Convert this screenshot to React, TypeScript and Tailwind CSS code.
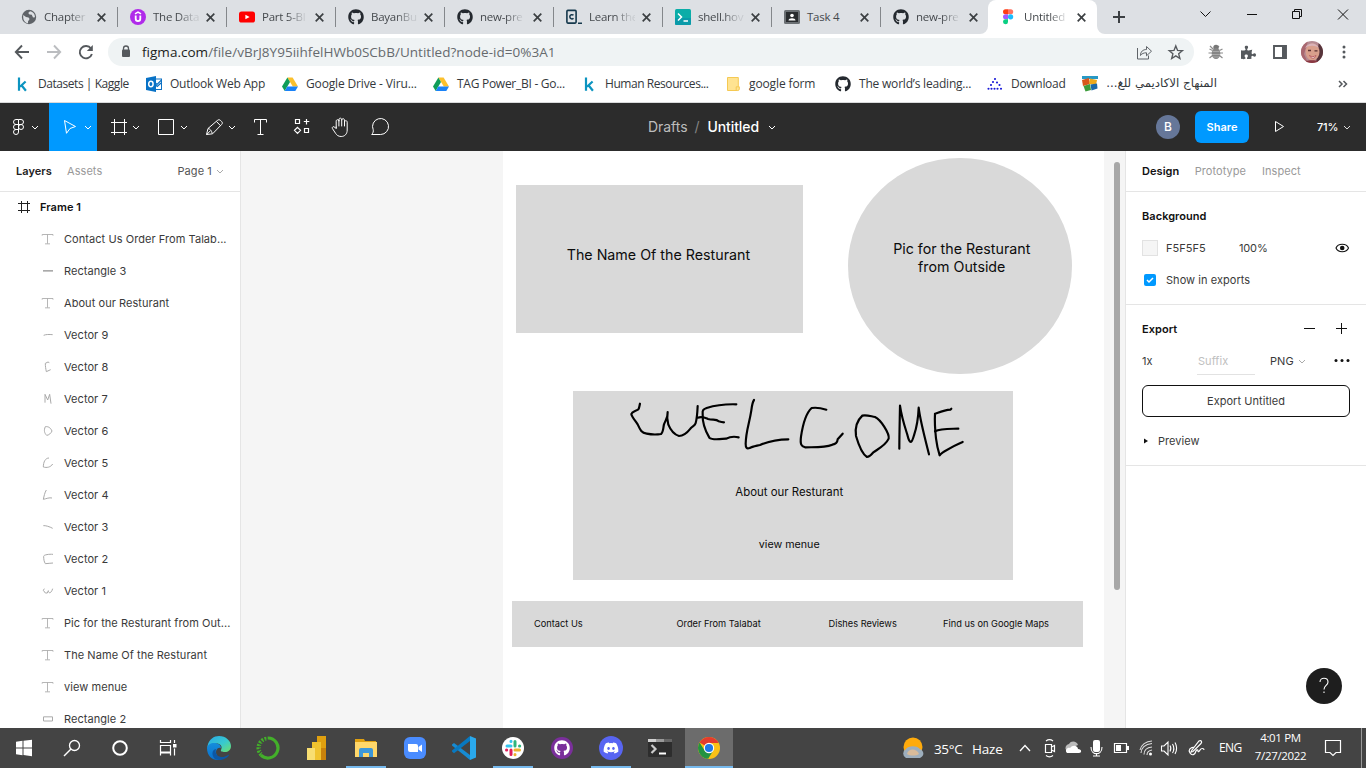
import React from "react";
import { FaGithub, FaDiscord, FaPuzzlePiece } from "react-icons/fa";

const INTER = "font-['Inter','Liberation_Sans',sans-serif]";
const UI = "font-['Open_Sans','Noto_Sans',sans-serif]";

type SvgProps = { w?: number; h?: number; vb?: string; className?: string; children: React.ReactNode };
const Svg = ({ w = 16, h = w, vb, className = "", children }: SvgProps) => (
  <svg width={w} height={h} viewBox={vb ?? `0 0 ${w} ${h}`} fill="none" className={`block shrink-0 ${className}`}>
    {children}
  </svg>
);

/* ---------- brand icons ---------- */
const Globe = () => (
  <Svg>
    <circle cx="8" cy="8" r="7.200" fill="#5f6368" />
    <path d="M2.300 6 5 8l2.500.4L8.600 10 7 12.500v1.700C4 13.800 1.600 11 2.300 6ZM9 2.200 7.200 4l1.300 1.500 2.300.3L12 8.600l2-.3C14 5 12 2.600 9 2.200Z" fill="#dde0e4" />
  </Svg>
);
const Udemy = () => (
  <Svg>
    <circle cx="8" cy="8" r="8" fill="#b02aea" />
    <path d="M5 4.900 8 3.100l3 1.800" stroke="#fff" strokeWidth="1.500" />
    <path d="M5.700 6.500v3.300a2.300 2.300 0 0 0 4.600 0V6.500" stroke="#fff" strokeWidth="1.800" />
  </Svg>
);
const YouTube = () => (
  <Svg>
    <rect y="2.500" width="16" height="11" rx="2.600" fill="#f00" />
    <path d="m6.400 5.700 4.200 2.300-4.200 2.300Z" fill="#fff" />
  </Svg>
);
const Github = () => <FaGithub className="block size-4 shrink-0 text-[#24292f]" />;
const Codecademy = () => (
  <Svg>
    <rect x=".9" y="1.400" width="9.200" height="12.700" rx="1" stroke="#15384c" strokeWidth="1.600" />
    <path d="M7.500 6.300C6.500 5.300 3.800 5.400 3.800 7.800s2.700 2.500 3.700 1.500M12 14.200h4" stroke="#15384c" strokeWidth="1.500" />
  </Svg>
);
const ShellHow = () => (
  <Svg>
    <rect width="16" height="16" rx="1.500" fill="#0bada8" />
    <path d="M0 9h16v5.500a1.500 1.500 0 0 1-1.500 1.500h-13A1.500 1.500 0 0 1 0 14.500Z" fill="#0a9aa9" />
    <path d="m3 4.500 3.500 3.500L3 11.500M8.500 12h4.500" stroke="#fff" strokeWidth="1.500" />
  </Svg>
);
const Classroom = () => (
  <Svg>
    <rect y="1" width="16" height="14" rx="1.500" fill="#6b7074" />
    <rect x="2" y="3" width="12" height="10" fill="#292c2f" />
    <circle cx="8" cy="6.500" r="1.800" fill="#fff" />
    <path d="M4.500 11.500c0-3 7-3 7 0Z" fill="#fff" />
  </Svg>
);
const FigmaLogo = () => (
  <Svg>
    <path d="M5.500.3H8v5H5.500a2.500 2.500 0 0 1 0-5Z" fill="#ff3d14" />
    <path d="M8 .3h2.700a2.500 2.500 0 0 1 0 5H8Z" fill="#ff7262" />
    <path d="M5.500 5.300H8v5H5.500a2.500 2.500 0 0 1 0-5Z" fill="#a259ff" />
    <circle cx="10.600" cy="7.800" r="2.600" fill="#1abcfe" />
    <path d="M5.500 10.300H8v2.600a2.500 2.500 0 1 1-2.500-2.600Z" fill="#0acf83" />
  </Svg>
);
const Kaggle = () => (
  <Svg>
    <path d="M5 1.500v13.300M11.600 5.500 6 10.800M7.500 9.200l4.400 5.600" stroke="#0c94c0" strokeWidth="2.200" />
  </Svg>
);
const Outlook = () => (
  <Svg>
    <rect x="7" y="3" width="8.500" height="10.500" fill="#fff" stroke="#0c71c4" />
    <path d="m8 5.500 3 3 4.500-4.500M9.500 9l1.800 1.500L15 7" stroke="#0c71c4" strokeWidth="1.200" />
    <path d="M0 2 10 0v16L0 14Z" fill="#0872c6" />
    <ellipse cx="4.900" cy="8" rx="2.200" ry="2.700" stroke="#fff" strokeWidth="1.500" />
  </Svg>
);
const Drive = () => (
  <Svg>
    <path d="M5.400 1.500h5.200L16 10.500h-5.200Z" fill="#fbc02d" />
    <path d="M5.400 1.500 8 6 2.700 14.900 0 10.500Z" fill="#0f9d58" />
    <path d="M5.300 10.500H16l-2.700 4.400H2.700Z" fill="#1a82f7" />
  </Svg>
);
const FolderPage = () => (
  <Svg>
    <path d="M2.500 1.500h10.800v9.300h1V13a1.500 1.500 0 0 1-1.500 1.500H2.500Z" fill="#ffe391" stroke="#f5c953" />
    <path d="M11.200 14.300v-3.500h2.300" stroke="#f5c953" />
  </Svg>
);
const Dots = () => (
  <Svg>
    {[[8, 3], [6, 6], [10, 6.500], [4, 9], [12.500, 9], [1.500, 12.800], [4.500, 12.800], [7.500, 12.800], [10.500, 12.800], [14, 12.800]].map(([x, y]) => (
      <circle key={`${x}-${y}`} cx={x} cy={y} r="1.050" fill="#1818d8" />
    ))}
  </Svg>
);
const Books = () => (
  <Svg>
    <path d="M0 0h16v3H0Z" fill="#2899c5" />
    <path d="m0 4 7-2 1 6-7 2Z" fill="#d9571c" />
    <path d="m8 2.500 7 1.500-1 5-7-1Z" fill="#eda91c" />
    <path d="m1.500 10 6.500-2 1 6-5.500 1.500Z" fill="#3c9c3b" />
    <path d="m8.500 8.500 6.500-1 .5 5-6 2Z" fill="#1a68a9" />
  </Svg>
);

/* ---------- browser ---------- */
const tabs: { label: string; icon: React.ReactNode }[] = [
  { label: "Chapter", icon: <Globe /> },
  { label: "The Data", icon: <Udemy /> },
  { label: "Part 5-Bl", icon: <YouTube /> },
  { label: "BayanBu", icon: <Github /> },
  { label: "new-pre", icon: <Github /> },
  { label: "Learn the", icon: <Codecademy /> },
  { label: "shell.hov", icon: <ShellHow /> },
  { label: "Task 4", icon: <Classroom /> },
  { label: "new-pre", icon: <Github /> },
  { label: "Untitled", icon: <FigmaLogo /> },
];

const TabStrip = () => (
  <div className="flex h-[34px] shrink-0 bg-[#dde0e4] pl-2">
    {tabs.map((t, i) => {
      const active = i === tabs.length - 1;
      const fade = t.label === "Task 4" ? "" : "[mask-image:linear-gradient(to_right,black_55%,rgba(0,0,0,0.15)_90%)]";
      return (
        <div key={i} className={`relative flex h-[34px] w-[109px] shrink-0 items-center pl-[13px] ${active ? "-ml-px rounded-t-lg bg-white pl-[12px]!" : ""}`}>
          {t.icon}
          <span className={`ml-[7px] w-[46px] text-[11.500px] tracking-[-0.250px] whitespace-nowrap text-[#45494d] ${active ? "ml-[8px]!" : ""} ${fade}`}>
            {t.label}
          </span>
          <Svg w={9} className="ml-[7px]">
            <path d="m.7.7 7.600 7.600M8.300.7.7 8.300" stroke="#3c4043" strokeWidth="1.700" />
          </Svg>
          {i < 8 && <span className="absolute top-[7px] right-[-1px] h-5 w-px bg-[#84878b]" />}
          {active && (
            <>
              <Svg w={8} className="absolute bottom-0 -left-2"><path d="M8 0v8H0a8 8 0 0 0 8-8Z" fill="#fff" /></Svg>
              <Svg w={8} className="absolute -right-2 bottom-0"><path d="M0 0v8h8a8 8 0 0 1-8-8Z" fill="#fff" /></Svg>
            </>
          )}
        </div>
      );
    })}
    <Svg w={43} h={34}><path d="M22 11v12M16 17h12" stroke="#3c4043" strokeWidth="2" /></Svg>
    <Svg w={118} h={34} className="ml-auto">
      <path d="m2.500 11.500 5 5 5-5M49 14.500h10" stroke="#111" />
      <path d="M94.500 11.500h7v7h-7ZM96.500 11.500v-2h7v7h-2" stroke="#111" />
    </Svg>
    <Svg w={12} h={34} className="mr-[17px] ml-[21px]"><path d="m1 9.500 10 10m0-10-10 10" stroke="#111" /></Svg>
  </div>
);

const AddressBar = () => (
  <div className="flex h-[36px] shrink-0 items-center bg-white">
    <Svg w={108} h={36}>
      <path d="M29 18H16.500M22 11.500 15.800 18l6.200 6.500" stroke="#55595d" strokeWidth="1.900" />
      <path d="M47 18h12.500M54 11.500l6.200 6.500-6.200 6.500" stroke="#bbbdc0" strokeWidth="1.900" />
      <path d="M91 14.500a6.200 6.200 0 1 0 .9 5.500" stroke="#55595d" strokeWidth="1.900" />
      <path d="M92.800 11v6h-6Z" fill="#55595d" />
    </Svg>
    <div className="flex h-7 w-[1086px] items-center rounded-full bg-[#eff3f4]">
      <Svg w={34} h={28}>
        <rect x="14" y="11.500" width="8" height="7.500" rx="1" fill="#55595d" />
        <path d="M15.500 12v-1.500a2.500 2.500 0 0 1 5 0V12" stroke="#55595d" strokeWidth="1.300" />
      </Svg>
      <span className="text-[13.500px] tracking-[0.025px] whitespace-nowrap text-[#666a6e]">
        <span className="text-[#1b1d20]">figma.com</span>/file/vBrJ8Y95iihfelHWb0SCbB/Untitled?node-id=0%3A1
      </span>
      <Svg w={68} h={28} className="ml-auto">
        <path d="M11.500 10v11h11v-3.500" stroke="#5f6368" />
        <path d="M14.500 17.500c0-4 2.500-6 6-6V8.500l5 4.700-5 4.600v-3c-3 0-4.500.7-6 2.700Z" stroke="#5f6368" />
        <path d="m49.800 7.900 1.800 4.500 4.800.3-3.700 3.100 1.200 4.700-4.100-2.600-4.100 2.600 1.200-4.700-3.700-3.100 4.800-.3Z" stroke="#55595d" strokeWidth="1.400" />
      </Svg>
    </div>
    <Svg w={44} h={36}>
      <path d="m16 12 3 3m6-3-3 3m-7.500 4H29M15.500 24l3-2.500m10 2.500-3-2.500M15.500 15l3 1.500m10-1.500-3 1.500" stroke="#8c8c8c" strokeWidth="1.200" />
      <circle cx="22" cy="13.500" r="2.700" fill="#777" />
      <ellipse cx="22" cy="19.500" rx="4.300" ry="5.500" fill="#858585" />
      <path d="M18.500 17.500h7m-7.500 3h8m-7 2.500h6" stroke="#a9a9a9" />
    </Svg>
    <FaPuzzlePiece className="ml-[3px] block size-[15px] text-[#55595d]" />
    <Svg w={14} className="ml-[17px]"><path d="M1 1h12v12H1Z" stroke="#55595d" strokeWidth="1.900" /><path d="M9 1h4v12H9Z" fill="#55595d" /></Svg>
    <Svg w={22} className="ml-[14px]">
      <defs><clipPath id="face"><circle cx="11" cy="11" r="11" /></clipPath></defs>
      <g clipPath="url(#face)">
        <path d="M0 0h22v22H0Z" fill="#b68b92" />
        <path d="M0 0h7L3 13l4 9H0Z" fill="#a9676f" />
        <path d="M18 0h4v22h-7Z" fill="#57343b" />
        <ellipse cx="11.500" cy="11" rx="7" ry="8.500" fill="#d99f8c" />
        <path d="M4 7c3-6 11-6 14 0C14 4 8 4 4 7Z" fill="#d9b3b9" />
        <path d="M7 9.500h3m3.500.3h3" stroke="#5c3230" strokeWidth="1.300" />
        <path d="M8.500 14.500c2 1.500 4.500 1.500 6.500 0-1 3.500-5 3.500-6.500 0Z" fill="#fff" stroke="#b0464c" strokeWidth=".8" />
        <path d="M5 20c3-1 9-1 12 0v2H5Z" fill="#8a3741" />
      </g>
    </Svg>
    <Svg w={22} h={36} className="ml-[10px]">
      <circle cx="11" cy="13" r="1.500" fill="#55595d" /><circle cx="11" cy="18" r="1.500" fill="#55595d" /><circle cx="11" cy="23" r="1.500" fill="#55595d" />
    </Svg>
  </div>
);

const bookmarks = [
  { icon: <Kaggle />, label: "Datasets | Kaggle", cls: "w-[132px] tracking-[-0.450px]" },
  { icon: <Outlook />, label: "Outlook Web App", cls: "w-[136px] tracking-[-0.220px]" },
  { icon: <Drive />, label: "Google Drive - Viru...", cls: "w-[151px] tracking-[-0.150px]" },
  { icon: <Drive />, label: "TAG Power_BI - Go...", cls: "w-[148px] tracking-[-0.270px]" },
  { icon: <Kaggle />, label: "Human Resources...", cls: "w-[144px] tracking-[-0.440px]" },
  { icon: <FolderPage />, label: "google form", cls: "w-[110px] tracking-[-0.120px]" },
  { icon: <Github />, label: "The world’s leading...", cls: "w-[152px] tracking-[-0.200px]" },
  { icon: <Dots />, label: "Download", cls: "w-[95px] tracking-[-0.300px]" },
];

const Bookmarks = () => (
  <div className="flex h-[33px] shrink-0 items-center border-b border-[#d9dadb] bg-white pb-[4px] pl-[14px] text-[12px] text-[#34383c]">
    {bookmarks.map((b) => (
      <div key={b.label} className={`flex shrink-0 items-center gap-2 whitespace-nowrap ${b.cls}`}>
        {b.icon}
        <span>{b.label}</span>
      </div>
    ))}
    <Books />
    <span dir="rtl" className="ml-2 w-[111px] font-['DejaVu_Sans',sans-serif] text-[11.800px] whitespace-nowrap">المنهاج الاكاديمي للغ...</span>
    <Svg w={10} className="mr-[18px] ml-auto"><path d="m1 2 3 3-3 3m4.500-6 3 3-3 3" stroke="#55595d" strokeWidth="1.500" /></Svg>
  </div>
);

/* ---------- figma toolbar ---------- */
const Chev = ({ x }: { x: number }) => <path d={`m${x} 23 3 3 3-3`} stroke="#fff" />;

const Tool = ({ w, active, children }: { w: number; active?: boolean; children: React.ReactNode }) => (
  <button className={`block shrink-0 ${active ? "bg-[#0099ff]" : ""}`}>
    <Svg w={w} h={48}>{children}</Svg>
  </button>
);

const Toolbar = () => (
  <div className={`flex h-12 shrink-0 items-center bg-[#2c2c2c] text-white ${INTER}`}>
    <Tool w={49}>
      <path d="M18.500 16.500h-2.500a2.500 2.500 0 0 0 0 5h2.500m0-5v12.500a2.500 2.500 0 1 1-2.500-2.500h2.500m0-10H21a2.500 2.500 0 0 1 0 5h-2.500m0 0H16a2.500 2.500 0 0 0 0 5h2.500M21 21.500a2.500 2.500 0 1 1 0 5 2.500 2.500 0 0 1 0-5Z" stroke="#fff" />
      <Chev x={32} />
    </Tool>
    <Tool w={48} active>
      <path d="m15.500 17.500 11 6-5.500 2-3.500 4.800Z" stroke="#fff" strokeLinejoin="round" />
      <Chev x={36} />
    </Tool>
    <Tool w={48}><path d="M14 19.500h16M14 29.500h16M17.500 16v16M27.500 16v16" stroke="#fff" /><Chev x={36} /></Tool>
    <Tool w={48}><path d="M13.500 16.500h15v15h-15Z" stroke="#fff" /><Chev x={36} /></Tool>
    <Tool w={48}>
      <path d="m13.500 31.500 1.500-6 9.300-8c1-1 2.300-1 3.300 0l1 1c1 1 1 2 0 3l-9 9.300Zm1.500-6c2 .3 3.500 2 4.300 5M23.500 18.500l4 4.200M13.700 31.500l3.500-3.500" stroke="#fff" />
      <Chev x={36} />
    </Tool>
    <Tool w={40}><path d="M13.500 19.500v-3h12v3M19.500 16.500v15M16.500 31.500h6" stroke="#fff" /></Tool>
    <Tool w={40}>
      <path d="M14.500 16.500h4v4h-4ZM23.500 25.500h4v4h-4ZM25.500 16v5.500M22.800 18.500h5.500M16.500 24.300l3 3-3 3-3-3Z" stroke="#fff" strokeWidth="1.200" />
    </Tool>
    <Tool w={40}>
      <path transform="translate(.7 0)" d="M14.500 24.500v-6.300c0-2 2.700-2 2.700 0v-1.500c0-2 2.800-2 2.800 0v.5c0-2 2.800-2 2.800 0v2c0-2 2.700-2 2.700 0V27c0 4-2.500 6.500-6 6.500-3 0-4.500-1.500-5.500-3l-3.300-5c-.7-1.500 1.200-2.500 2.300-1.300l1.500 1.500V24M17.200 17v6M20 17v6M22.800 18v5" stroke="#fff" strokeLinecap="round" />
    </Tool>
    <Tool w={40}><path transform="translate(.7 0)" d="M10 31.500h9a8 8 0 1 0-7.500-4.800c.3 1.500 0 3.300-1.500 4.800Z" stroke="#fff" /></Tool>
    <div className="flex w-[377px] items-center pl-[247px] text-[14px] tracking-[-0.050px] whitespace-nowrap -translate-y-px">
      <span className="text-[#bdbdbd]">Drafts</span>
      <span className="mx-[7px] text-[#858585]">/</span>
      <span className="ml-px font-medium tracking-[-0.100px]">Untitled</span>
      <Svg w={8} className="mt-[2px] ml-[9px]"><path d="m1 3 3 3 3-3" stroke="#fff" /></Svg>
    </div>
    <span className="ml-auto flex size-6 items-center justify-center rounded-full bg-[#667799] text-[12px] font-medium">B</span>
    <button className="ml-[15px] h-8 w-[54px] rounded-md bg-[#0099ff] text-[11px] font-semibold tracking-[0.050px]">Share</button>
    <Svg w={60} h={48}><path d="M26.500 18.500v10l8-5Z" stroke="#fff" /></Svg>
    <span className="ml-[8px] w-[26px] text-[11px] font-medium tracking-[-0.200px]">71%</span>
    <Svg w={8} className="mr-[15px]"><path d="m1 3 3 3 3-3" stroke="#ddd" /></Svg>
  </div>
);

/* ---------- layers panel ---------- */
const textGlyph = "M6.500 14V10.500H39V14M22.500 10.500V38M15 38.500H30";
const layers: { label: string; d: string; sw?: number }[] = [
  { label: "Contact Us Order From Talab...", d: textGlyph, sw: 2.600 },
  { label: "Rectangle 3", d: "M9 23.500H39", sw: 5 },
  { label: "About our Resturant", d: textGlyph, sw: 2.600 },
  { label: "Vector 9", d: "M11 25C17 22 28 22 38 23" },
  { label: "Vector 8", d: "M28 11 24 9 16 13C16 22 17 28 19 38L32 32" },
  { label: "Vector 7", d: "M15 35V10L23 27 29 10 33 38" },
  { label: "Vector 6", d: "M16 11C11 22 13 30 20 37 26 37 34 30 36 24 31 13 24 10 16 11Z" },
  { label: "Vector 5", d: "M27 9C16 9 10 21 10 36 20 39 32 37 38 27" },
  { label: "Vector 4", d: "M19 9C14 17 12 28 10 37 19 35 28 31 36 33" },
  { label: "Vector 3", d: "M10 20C16 19 29 23 38 28" },
  { label: "Vector 2", d: "M39 10C28 9 11 11 11 16 11 24 12 32 16 38 23 37 32 37 39 36" },
  { label: "Vector 1", d: "M13 17 10 22 16 30H22L25 23C26 33 34 31 38 17" },
  { label: "Pic for the Resturant from Out...", d: textGlyph, sw: 2.600 },
  { label: "The Name Of the Resturant", d: textGlyph, sw: 2.600 },
  { label: "view menue", d: textGlyph, sw: 2.600 },
  { label: "Rectangle 2", d: "M10.500 17.500H37.500V30H10.500Z", sw: 3 },
];

const LayersPanel = () => (
  <aside className="flex w-[241px] shrink-0 flex-col overflow-hidden border-r border-[#e5e5e5] bg-white text-[11px] tracking-[0.060px] text-[#3a3a3a]">
    <div className="flex h-[41px] shrink-0 items-center border-b border-[#e5e5e5] pl-4">
      <span className="w-[51px] font-semibold text-[#222]">Layers</span>
      <span className="w-[110.500px] text-[#999]">Assets</span>
      <span className="text-[#555]">Page 1</span>
      <Svg w={8} className="ml-1"><path d="m1 3 3 3 3-3" stroke="#aaa" /></Svg>
    </div>
    <div className="-mt-px flex h-8 shrink-0 items-center pl-4 font-semibold text-[#111]">
      <Svg><path d="M2 4.500h12M2 11.500h12M5.500 2v12M11.500 2v12" stroke="#222" /></Svg>
      <span className="ml-2">Frame 1</span>
    </div>
    {layers.map((l) => (
      <div key={l.label} className="flex h-8 shrink-0 items-center gap-2 pl-10 whitespace-nowrap">
        <Svg vb="0 0 48 48"><path d={l.d} stroke="#aaa" strokeWidth={l.sw ?? 3} /></Svg>
        <span>{l.label}</span>
      </div>
    ))}
  </aside>
);

/* ---------- canvas ---------- */
const Canvas = () => (
  <main className="relative w-[884px] shrink-0 overflow-hidden bg-[#f5f5f5] text-[#0c0c0c]">
    <div className="absolute top-0 left-[262px] h-full w-[601px] bg-white">
      <div className="absolute top-[34px] left-[13.400px] flex h-[148px] w-[287px] items-center justify-center bg-[#d9d9d9] pb-2 text-[14.250px] whitespace-nowrap">
        <span className="-ml-[3px]">The Name Of the Resturant</span>
      </div>
      <div className="absolute top-[7px] left-[345px] flex h-[216px] w-[223.500px] items-center justify-center rounded-[50%] bg-[#d9d9d9] pb-[17px] pl-1 text-center text-[14.250px] leading-[17.200px] whitespace-nowrap">
        <span>Pic for the Resturant<br />from Outside</span>
      </div>
      <div className="absolute top-[239.500px] left-[69.500px] flex h-[189.500px] w-[440.500px] flex-col items-center bg-[#d9d9d9] pt-[93.500px] pr-[7px] text-[11.400px] leading-4 whitespace-nowrap">
        <span>About our Resturant</span>
        <span className="mt-[37px] text-[10.700px]">view menue</span>
      </div>
      <svg className="absolute top-[229px] left-[57px]" width="460" height="210" viewBox="0 0 1380 630" fill="none" stroke="#000" strokeWidth="6.500" strokeLinecap="round" strokeLinejoin="round">
        <path d="M240 71C238 78 238 85 235 88C226 94 216 94 214 102C216 112 226 122 233 133C240 148 243 158 260 161C275 164 291 164 303 162C310 157 309 147 312 133C318 117 324 112 323 96C321 106 321 119 325 134C332 151 343 164 357 168C372 168 384 155 392 145C399 137 405 137 407 129C411 116 412 99 413 78" />
        <path d="M529 73C494 72 459 78 440 84C429 88 427 91 428 101C427 123 436 153 448 173C456 181 480 177 498 176C512 169 524 169 536 172" />
        <path d="M413 113C428 108 437 114 444 117C459 121 469 116 476 124C482 126 487 127 492 127" />
        <path d="M582 60C577 67 576 74 574 91C568 131 558 151 557 191C557 204 560 207 569 204C576 200 588 198 600 195C626 184 650 178 685 178" />
        <path d="M799 89C783 84 768 82 755 84C735 102 728 136 723 170C720 193 724 200 736 202C757 201 793 204 817 194C828 192 832 188 833 178L848 161" />
        <path d="M945 111C929 108 918 104 907 107C894 119 884 140 888 168C895 192 906 222 921 231C929 231 933 225 940 217C956 206 977 196 986 176C989 160 962 119 945 111Z" />
        <path d="M1018 206C1018 167 1019 131 1020 77C1025 113 1034 139 1042 164C1050 197 1056 188 1062 166C1071 139 1075 109 1076 83C1080 119 1091 160 1107 223" />
        <path d="M1174 86L1171 89C1154 90 1137 97 1125 101C1124 119 1125 148 1128 175C1130 192 1135 213 1139 226C1148 214 1177 200 1208 186" />
        <path d="M1125 154C1141 146 1162 147 1195 146" />
      </svg>
      <div className="absolute top-[450px] left-[9px] flex h-[46px] w-[571px] items-center bg-[#d9d9d9] pl-[22px] text-[9.250px] whitespace-nowrap">
        <span className="w-[142.500px]">Contact Us</span>
        <span className="w-[152px]">Order From Talabat</span>
        <span className="w-[114.500px]">Dishes Reviews</span>
        <span>Find us on Google Maps</span>
      </div>
    </div>
    <div className="absolute top-[11px] left-[873px] h-[428px] w-[6px] rounded-full bg-[#a8a8a8]" />
  </main>
);

/* ---------- design panel ---------- */
const DesignPanel = () => (
  <aside className="relative flex w-[241px] shrink-0 flex-col border-l border-[#e5e5e5] bg-white text-[11px] tracking-[0.050px] text-[#3a3a3a]">
    <div className="flex h-[41px] shrink-0 items-center gap-4 border-b border-[#e5e5e5] pl-4 text-[#999]">
      <span className="font-semibold text-[#111]">Design</span>
      <span className="-ml-[0.500px]">Prototype</span>
      <span>Inspect</span>
    </div>
    <section className="flex h-[113px] shrink-0 flex-col border-b border-[#e5e5e5] pt-2 pr-4 pl-4">
      <div className="flex h-8 items-center font-semibold text-[#111]">Background</div>
      <div className="flex h-8 items-center">
        <span className="size-4 border border-[#e2e2e2] bg-[#f5f5f5]" />
        <span className="ml-2 w-[73px]">F5F5F5</span>
        <span className="tracking-[-0.150px]">100%</span>
        <Svg className="ml-auto">
          <path d="M2 8c2-5 10.500-5 12.500 0-2 5-10.500 5-12.500 0Z" stroke="#111" strokeWidth="1.100" />
          <circle cx="8.200" cy="8" r="2.300" fill="#111" />
        </Svg>
      </div>
      <div className="flex h-8 items-center pl-[2px]">
        <span className="flex size-3 items-center justify-center rounded-[2px] bg-[#0099ff]">
          <Svg w={8}><path d="m1 4 2 2 4-4" stroke="#fff" strokeWidth="1.500" /></Svg>
        </span>
        <span className="ml-[10px]">Show in exports</span>
      </div>
    </section>
    <section className="flex h-[161px] shrink-0 flex-col border-b border-[#e5e5e5] px-4 pt-2">
      <div className="flex h-8 items-center font-semibold text-[#111]">
        Export
        <Svg w={50} h={16} className="ml-auto"><path d="M4 7.500h11M36 7.500h11M41.500 2v11" stroke="#111" /></Svg>
      </div>
      <div className="flex h-8 items-center">
        <span className="w-[55px]">1x</span>
        <span className="flex h-[30px] w-[58px] items-center self-start border-b border-[#e2e2e2] pt-[3px] pl-[1px] text-[#c0c0c0]">Suffix</span>
        <span className="ml-[15px]">PNG</span>
        <Svg w={8} className="ml-1"><path d="m1 3 3 3 3-3" stroke="#aaa" /></Svg>
        <Svg w={16} className="ml-auto"><circle cx="2" cy="7.500" r="1.500" fill="#111" /><circle cx="8" cy="7.500" r="1.500" fill="#111" /><circle cx="14" cy="7.500" r="1.500" fill="#111" /></Svg>
      </div>
      <button className="mt-[8px] h-8 rounded-md border border-[#111]">Export Untitled</button>
      <div className="mt-2 flex h-8 items-center">
        <Svg w={16}><path d="M2 5.500 6 8 2 10.500Z" fill="#111" /></Svg>
        <span>Preview</span>
      </div>
    </section>
    <button className="absolute top-[517px] left-[180px] flex size-9 items-center justify-center rounded-full bg-[#1e1e1e]">
      <Svg w={12} h={18}><path d="M2 5c0-5 8-5 8 0 0 3.500-4 3.500-4 7.500M6 14.500v1.500" stroke="#fff" strokeWidth="1.100" /></Svg>
    </button>
  </aside>
);

/* ---------- taskbar ---------- */
const EdgeIcon = () => (
  <Svg w={24}>
    <defs>
      <linearGradient id="e1" x1="0" y1="0" x2="1" y2="1"><stop stopColor="#29a9e8" /><stop offset=".55" stopColor="#38c9cf" /><stop offset="1" stopColor="#6ee06a" /></linearGradient>
      <linearGradient id="e2" x1="0" y1="0" x2="0" y2="1"><stop stopColor="#158ddc" /><stop offset="1" stopColor="#0a70cc" /></linearGradient>
    </defs>
    <path d="M.5 10C2 3 7 0 12 0c7 0 12 5 12 10 0 4-3 6-6 6-3.500 0-4.500-1-4-2 2-4-1-6.500-4.500-6.500C5 7.500 1 9 .5 13Z" fill="url(#e1)" />
    <path d="M0 12C.5 8.500 4.500 6.500 8 7c4 .3 6 3 6 5-1.500-1-5 0-5 4 0 4.500 4 7 8 6-7 4.500-17 1-17-10Z" fill="url(#e2)" />
    <path d="M9 13c-2 6 4 9.500 9 7.500 1.500-.5 3-1.500 4-2 0 3-8 7.500-14 4.500C4 19 5 13.500 9 13Z" fill="#0d57a5" />
  </Svg>
);
const Anaconda = () => (
  <Svg w={24}>
    <path d="M12 2a10 10 0 1 1-7 17.200" stroke="#43b02a" strokeWidth="3.200" />
    <path d="M5 19.200A10 10 0 0 1 12 2" stroke="#43b02a" strokeWidth="3" strokeDasharray="2 1.300" />
    <path d="M6 17A8 8 0 0 1 11 4" stroke="#43b02a" strokeWidth="1.200" strokeDasharray="1 1.500" />
  </Svg>
);
const PowerBI = () => (
  <Svg w={24}>
    <path d="M12 0h9v24h-9Z" fill="#e0a00f" /><path d="M16 12h5v12h-5Z" fill="#c9820b" />
    <path d="M7 6h9v18H7Z" fill="#f0c32f" /><path d="M2 12h8v12H2Z" fill="#f8de72" />
  </Svg>
);
const Explorer = () => (
  <Svg w={24}>
    <path d="M1 3h9l1 2h11v15H1Z" fill="#e0a010" /><path d="M1 6h22v15H1Z" fill="#ffd76a" />
    <path d="M5 14a2 2 0 0 1 2-2h10a2 2 0 0 1 2 2v7h-4v-4H9v4H5Z" fill="#3d97d8" />
  </Svg>
);
const Zoom = () => (
  <Svg w={24}>
    <rect x="1" y="1" width="22" height="22" rx="6" fill="#4a8cff" />
    <path d="M5 8h8a2 2 0 0 1 2 2v6H7a2 2 0 0 1-2-2ZM15.500 11 19 8.500v7.500l-3.500-2.500Z" fill="#fff" />
  </Svg>
);
const VSCode = () => (
  <Svg w={24}>
    <path d="M0 8.500 2 7l16 12v5L0 9.500Z" fill="#168bd2" />
    <path d="m0 15.500 2 1.700L18 5V0L0 14.500Z" fill="#0879c1" />
    <path d="m18 0 6 2.500v19L18 24Z" fill="#2aa9ed" />
  </Svg>
);
const Slack = () => (
  <Svg w={24}>
    <circle cx="12" cy="12" r="11" fill="#fff" />
    <g strokeWidth="3" strokeLinecap="round">
      <path d="M6 10h4M10 5.300v.2" stroke="#36c5f0" /><path d="M14 5.500V10M18.500 10h.2" stroke="#2eb67d" />
      <path d="M14 14h4.500M14 18.500v.2" stroke="#ecb22e" /><path d="M10 14v4.500M5.500 14h.2" stroke="#e01e5a" />
    </g>
  </Svg>
);
const GithubDesktop = () => (
  <span className="flex size-[22px] items-center justify-center rounded-full bg-[#7a2f9b]"><FaGithub className="size-[16px] text-white" /></span>
);
const Discord = () => (
  <span className="flex size-6 items-center justify-center rounded-full bg-[#5865f2]"><FaDiscord className="size-4 text-white" /></span>
);
const Terminal = () => (
  <Svg w={24}>
    <rect y="3" width="24" height="18" rx="1" fill="#2d2d2d" /><path d="M0 3h8v3H0Z" fill="#d0d0d0" /><path d="M8 3h8v3H8Z" fill="#999" /><path d="M16 3h8v3h-8Z" fill="#666" />
    <path d="m3.500 9 4 4-4 4" stroke="#ccc" strokeWidth="2.200" /><path d="M11 17.500h7" stroke="#fff" strokeWidth="2" />
  </Svg>
);
const Chrome = () => (
  <Svg w={24}>
    <circle cx="12" cy="12" r="11" fill="#fbc116" />
    <path d="M12 12 2.500 6.500A11 11 0 0 1 21.500 6.500L21 7H12Z" fill="#e33b2e" />
    <path d="M2.500 6.500 7.700 14.500 12 17l-1.500 5.900A11 11 0 0 1 2.500 6.500Z" fill="#229342" />
    <path d="M16.300 14.500 11 23l-1-5Z" fill="#229342" />
    <circle cx="12" cy="12" r="5.200" fill="#fff" /><circle cx="12" cy="12" r="4.100" fill="#2078e8" />
  </Svg>
);

const apps: { icon: React.ReactNode; open?: boolean; active?: boolean }[] = [
  { icon: <EdgeIcon /> }, { icon: <Anaconda /> }, { icon: <PowerBI /> }, { icon: <Explorer />, open: true }, { icon: <Zoom /> },
  { icon: <VSCode /> }, { icon: <Slack />, open: true }, { icon: <GithubDesktop /> }, { icon: <Discord />, open: true }, { icon: <Terminal /> },
  { icon: <Chrome />, active: true },
];

const Taskbar = () => (
  <footer className="flex h-10 shrink-0 items-center bg-[#444444] text-white">
    <Svg w={195} h={40}>
      <path d="m16 13.700 6.500-.9v6.700H16Zm7.500-1L32 11.800v7.700h-8.500ZM16 20.500h6.500v6.700l-6.500-.9Zm7.500 0H32v7.700l-8.500-1.100Z" fill="#fff" />
      <circle cx="74.500" cy="17.500" r="5" stroke="#fff" strokeWidth="1.300" /><path d="m71 21-7 7" stroke="#fff" strokeWidth="1.400" />
      <circle cx="120" cy="20" r="6.800" stroke="#fff" strokeWidth="2" />
      <path d="M160.500 12v2.500h10V12M160.500 17.500h10v6.500h-10ZM160.500 27.500v-2.500h10v2.500M174.500 12v3m0 5.500v7" stroke="#fff" strokeWidth="1.200" /><path d="M173 16h3.500v3.500H173Z" fill="#fff" />
    </Svg>
    <div className="flex h-10 gap-px">
      {apps.map((a, i) => (
        <div key={i} className={`relative flex h-10 w-12 items-center justify-center ${a.active ? "bg-[#6c6c6c]" : ""}`}>
          {a.icon}
          {a.open && <span className="absolute bottom-0 left-1 h-[2px] w-10 bg-[#76b9ed]" />}
          {a.active && <span className="absolute bottom-0 left-0 h-[2px] w-12 bg-[#76b9ed]" />}
        </div>
      ))}
    </div>
    <Svg w={22} className="ml-[169px]">
      <circle cx="11" cy="10" r="9.500" fill="#ffab0c" />
      <path d="M4 21a5 5 0 0 1 0-9c2-3 10-4 14 0 4 1.500 5 7 0 9Z" fill="#9daebd" /><path d="M5 17c1-6 10-6 12 0-3 2-9 2-12 0Z" fill="#d9bb9a" />
    </Svg>
    <span className="mt-[2px] ml-[10px] w-[38px] text-[13.500px] tracking-[-0.350px]">35°C</span>
    <span className="mt-[2px] w-[43px] text-[13.500px] tracking-[-0.200px]">Haze</span>
    <Svg w={200} h={40}>
      <path d="m5 23 5-5.500 5 5.500" stroke="#fff" strokeWidth="1.300" />
      <path d="M30.500 16.500h6v8h-6ZM36.500 19l3-1.500v6l-3-1.500M31 13c2-1.500 5-1.500 7 0M31 27.500c2 1.500 5 1.500 7 0" stroke="#fff" strokeWidth="1.200" />
      <path d="M51 22a4 4 0 0 1 3-6c2-4 8-3 9 1Z" fill="#bbb" /><path d="M52 25c-3-3 1-6 3-5 3-4 8-2 8 1 4 0 4 4 1 4Z" fill="#fff" />
      <rect x="78" y="12" width="7" height="12" rx="2" fill="#fff" /><path d="M76 19c0 9 11 9 11 0M81.500 25v3M78 28h7" stroke="#fff" strokeWidth="1.100" />
      <path d="M99.500 15.500h12v9h-12Z" stroke="#fff" strokeWidth="1.200" /><path d="M101 17h5v6h-5ZM112 18h2v4h-2Z" fill="#fff" />
      <path d="M126 25c0-5 4-9 11-9.500M129 26.500c0-4 3-7 8-7.500M132 27c0-2.500 2-4.500 5-5M125 22c1-5 6-9 12-9" stroke="#ddd" strokeWidth="1.100" /><circle cx="135.500" cy="26" r="1.500" fill="#fff" />
      <path d="M146.500 18h2.500l4-4v13l-4-4h-2.500ZM155 17.500c1 1.500 1 4 0 6M157.500 16c1.500 2.500 1.500 6.500 0 9M160 14.500c2 3.500 2 8 0 11.500" stroke="#fff" strokeWidth="1.100" />
      <path d="m177 22 7-9c2-1.500 3.500 1 2 2.500l-8 8-2 .5ZM180 19c-5 0-7 3-5 6s5 2 6-2c1-2 2-1 2 0s1 1 2-1 4-2 4 0" stroke="#fff" strokeWidth="1.200" />
    </Svg>
    <span className="ml-[4px] w-[23px] text-[12px] tracking-[-0.600px]">ENG</span>
    <div className="ml-[10px] flex w-[57px] -translate-y-px flex-col items-center text-[11.500px] leading-[18px] tracking-[-0.350px] whitespace-nowrap">
      <span>4:01 PM</span>
      <span>7/27/2022</span>
    </div>
    <Svg w={50} h={40} className="ml-auto"><path d="M9.500 12.500h15v12H20l-3 3-3-3H9.500Z" stroke="#fff" strokeWidth="1.200" /><path d="M45.500 0v40" stroke="#999" /></Svg>
  </footer>
);

export default function App() {
  return (
    <div className={`flex h-[768px] w-[1366px] flex-col overflow-hidden bg-white ${UI}`}>
      <TabStrip />
      <AddressBar />
      <Bookmarks />
      <Toolbar />
      <div className={`flex h-[577px] shrink-0 overflow-hidden ${INTER}`}>
        <LayersPanel />
        <Canvas />
        <DesignPanel />
      </div>
      <Taskbar />
    </div>
  );
}
